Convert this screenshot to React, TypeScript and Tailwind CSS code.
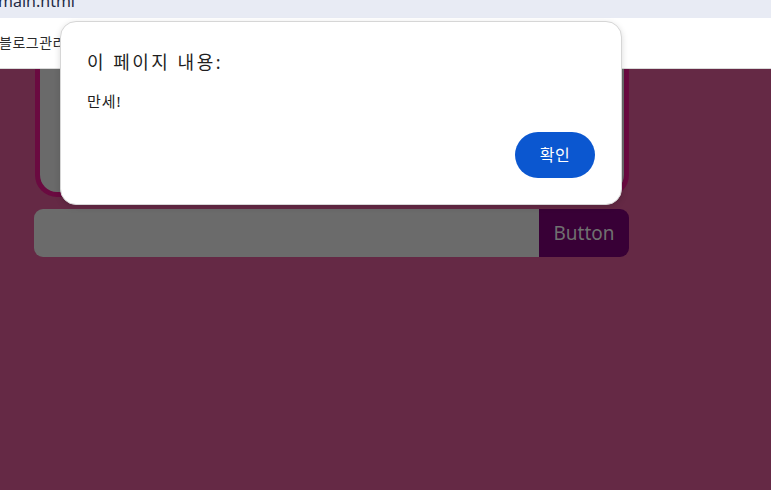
const KR = "font-['Noto_Sans','Noto_Sans_CJK_KR',sans-serif]";

export default function App() {
	return (
		<div className={`relative h-[490px] w-[771px] overflow-hidden bg-[#652945] ${KR}`}>
			{/* tab strip, cut at the top */}
			<div className="h-[18px] bg-[#e8ebf4] overflow-hidden">
				<div className="-mt-[9px] pl-0 text-[16px] leading-[20px] text-[#1f2a44] -ml-[2px]">main.html</div>
			</div>
			{/* bookmarks bar */}
			<div className="h-[51px] bg-white border-b border-[#d9d9d9] flex items-center">
				<span className="-ml-[1px] -mt-[2px] text-[14px] tracking-[0.5px] text-[#2b2b2b]">블로그관리</span>
			</div>

			{/* page */}
			<div className="pl-[35px] w-[629px]">
				<div className="h-[128px] border-x-[5px] border-b-[5px] border-[#6a0a40] bg-[#6a6a6a] rounded-b-[22px]" />
				<div className="mt-[12px] -ml-[1px] flex h-[48px] rounded-[9px] overflow-hidden">
					<div className="flex-1 bg-[#6b6b6b]" />
					<div className="w-[90px] bg-[#380036] flex items-center justify-center text-[19px] text-[#707070]">
						Button
					</div>
				</div>
			</div>

			{/* alert dialog */}
			<div className="absolute left-[60px] top-[21px] w-[562px] h-[184px] bg-white rounded-[16px] border border-[#d6d6d6] shadow-[0_2px_6px_rgba(0,0,0,0.15)] px-[26px] pt-[26px]">
				<div className="text-[18px] leading-[28px] tracking-[2.5px] text-[#1f1f1f]">이 페이지 내용:</div>
				<div className="mt-[14px] text-[15px] leading-[22px] tracking-[1px] text-[#1f1f1f]">만세!</div>
				<div className="mt-[20px] flex justify-end">
					<button className="h-[46px] w-[80px] rounded-full bg-[#0b57d0] text-white text-[16px] tracking-[0.5px]">확인</button>
				</div>
			</div>
		</div>
	);
}
